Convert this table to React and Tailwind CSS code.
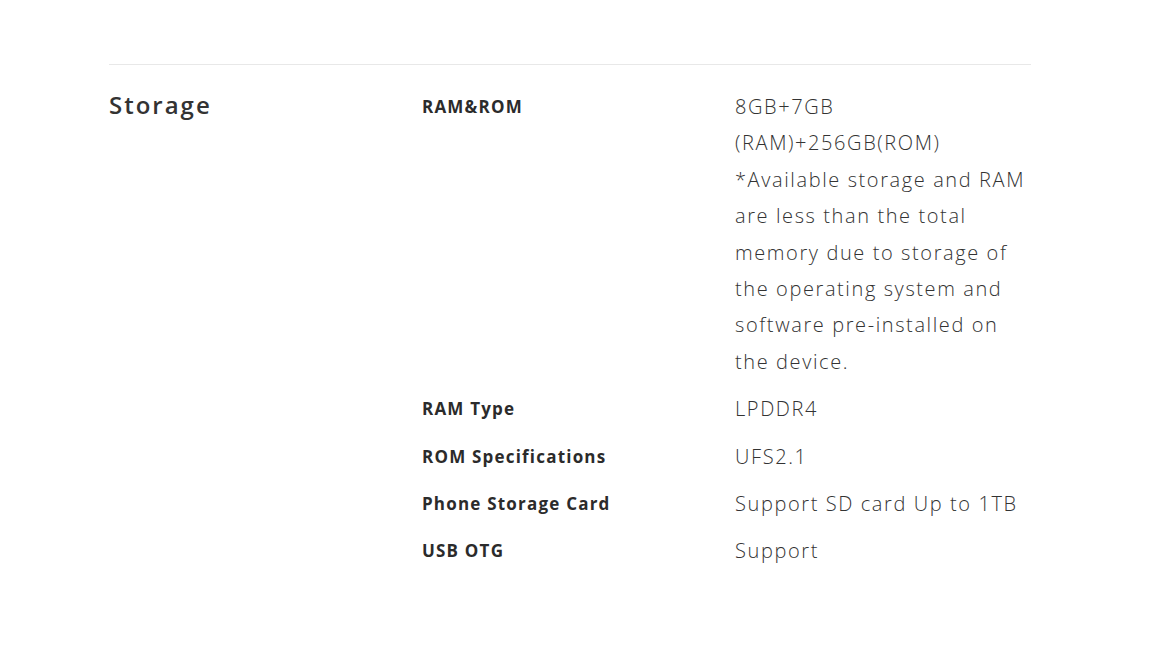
import React from 'react';

const specs = [
  {
    label: 'RAM&ROM',
    lines: [
      '8GB+7GB',
      '(RAM)+256GB(ROM)',
      '*Available storage and RAM',
      'are less than the total',
      'memory due to storage of',
      'the operating system and',
      'software pre-installed on',
      'the device.',
    ],
  },
  { label: 'RAM Type', lines: ['LPDDR4'] },
  { label: 'ROM Specifications', lines: ['UFS2.1'] },
  { label: 'Phone Storage Card', lines: ['Support SD card Up to 1TB'] },
  { label: 'USB OTG', lines: ['Support'] },
];

const App = () => {
  return (
    <div className="min-h-screen bg-white font-['Open_Sans',sans-serif] text-[#333]">
      <div className="w-[922px] pt-16 ml-[109px]">
        <div className="border-t border-[#e8e8e8] pt-6 grid grid-cols-[313px_313px_1fr]">
          <h2 className="text-[24px] font-semibold leading-8 tracking-[2px]">Storage</h2>
          <div className="col-span-2 flex flex-col gap-[11px]">
            {specs.map((spec) => (
              <div key={spec.label} className="grid grid-cols-[313px_1fr]">
                <div className="text-[17px] font-bold leading-[36px] tracking-[1.2px] text-[#2b2b2b]">
                  {spec.label}
                </div>
                <div className="text-[20px] font-light leading-[36.4px] tracking-[1.6px] whitespace-nowrap">
                  {spec.lines.map((line) => (
                    <div key={line}>{line}</div>
                  ))}
                </div>
              </div>
            ))}
          </div>
        </div>
      </div>
    </div>
  );
};

export default App;
